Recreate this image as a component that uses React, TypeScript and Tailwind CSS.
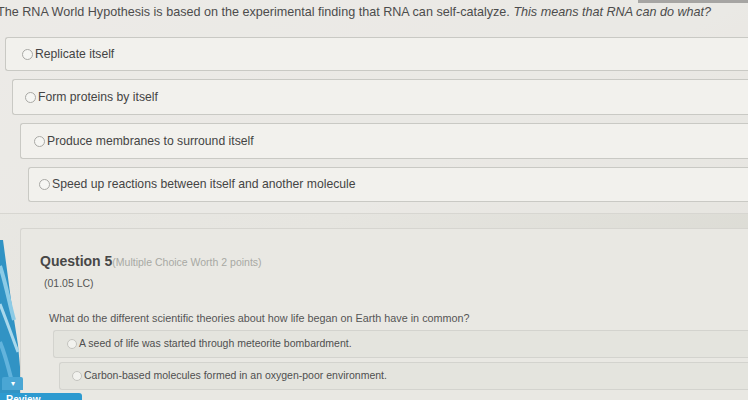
import React from "react";

type Choice = {
  label: string;
  box: string;
  pad: string;
};

const firstChoices: Choice[] = [
  { label: "Replicate itself", box: "ml-[5px] h-[34px]", pad: "pl-[16px]" },
  { label: "Form proteins by itself", box: "ml-[12px] h-[36px]", pad: "pl-[12px]" },
  { label: "Produce membranes to surround itself", box: "ml-[20px] h-[36px]", pad: "pl-[13px]" },
  { label: "Speed up reactions between itself and another molecule", box: "ml-[28px] h-[35px]", pad: "pl-[10px]" },
];

const nextChoices: Choice[] = [
  { label: "A seed of life was started through meteorite bombardment.", box: "ml-[32px] h-[28px]", pad: "pl-[13px]" },
  { label: "Carbon-based molecules formed in an oxygen-poor environment.", box: "ml-[38px] h-[28px]", pad: "pl-[12px]" },
];

function Radio({ small }: { small?: boolean }) {
  return (
    <span
      className={
        small
          ? "h-[10px] w-[10px] shrink-0 rounded-full border border-[#c4c4bf] bg-[#f2f2ee]"
          : "h-[11px] w-[11px] shrink-0 rounded-full border border-[#a9a9a5] bg-[#f6f6f3]"
      }
    />
  );
}

export default function App() {
  return (
    <div
      className="relative h-[400px] w-[748px] overflow-hidden bg-gradient-to-br from-[#ebeae6] via-[#e6e5e0] to-[#d6d6ce] text-[#4a4a4a]"
      style={{ fontFamily: '"Liberation Sans", Arial, sans-serif' }}
    >
      {/* wallpaper showing at the lower left */}
      <svg className="absolute left-0 top-0" width="40" height="400" viewBox="0 0 40 400">
        <polygon points="0,240 3,240 11,300 18,345 23,400 0,400" fill="#3193c4" />
        <path d="M0 266 C6 284 9 302 14 320" stroke="#8ccbe6" strokeWidth="4" fill="none" />
        <path d="M0 304 C7 322 12 336 18 352" stroke="#a9d8ec" strokeWidth="3" fill="none" />
        <path d="M0 342 C5 354 8 366 11 378" stroke="#62b3dc" strokeWidth="4" fill="none" />
      </svg>
      <div className="absolute right-0 top-0 h-[3px] w-[110px] bg-[#3d3d3d]" />

      <div className="relative flex flex-col">
        {/* previous question */}
        <section className="h-[214px] border-b border-[#d7d6d1] bg-[#ecebe7]/60">
          <p className="-ml-[3px] whitespace-nowrap pt-[5px] text-[12.6px] leading-[14px] text-[#4c4c4c]">
            The RNA World Hypothesis is based on the experimental finding that RNA can self-catalyze.{" "}
            <i>This means that RNA can do what?</i>
          </p>
          <div className="mt-[18px] flex flex-col gap-[8px]">
            {firstChoices.map((c) => (
              <div
                key={c.label}
                className={`${c.box} ${c.pad} flex items-center gap-[2px] rounded-l-[3px] border border-r-0 border-[#c9c9c4] bg-[#f2f1ed]`}
              >
                <Radio />
                <span className="whitespace-nowrap text-[12.2px] text-[#444]">{c.label}</span>
              </div>
            ))}
          </div>
        </section>

        {/* question 5 */}
        <section className="ml-[20px] mt-[14px] h-[200px] rounded-tl-[3px] border-l border-t border-[#d6d5d0] bg-[#e9e8e3] pl-[19px] pt-[22px]">
          <div className="flex items-baseline whitespace-nowrap">
            <span className="text-[14px] font-bold text-[#474747]">Question 5</span>
            <span className="text-[10.5px] text-[#a8a8a4]">(Multiple Choice Worth 2 points)</span>
          </div>
          <div className="ml-[4px] mt-[4px] text-[10.5px] text-[#555]">(01.05 LC)</div>
          <div className="ml-[9px] mt-[18px] whitespace-nowrap text-[10.8px] text-[#555]">
            What do the different scientific theories about how life began on Earth have in common?
          </div>
          <div className="-ml-[19px] mt-[4px] flex flex-col gap-[4px]">
            {nextChoices.map((c) => (
              <div
                key={c.label}
                className={`${c.box} ${c.pad} flex items-center gap-[2px] rounded-l-[3px] border border-r-0 border-[#d3d3ce] bg-[#e4e4de]`}
              >
                <Radio small />
                <span className="whitespace-nowrap text-[10.5px] text-[#4f4f4f]">{c.label}</span>
              </div>
            ))}
          </div>
        </section>
      </div>

      {/* bottom-left controls */}
      <div className="absolute left-[2px] top-[377px] flex h-[13px] w-[21px] items-center justify-center rounded-t-[2px] bg-[#4aa6d4] text-[8px] leading-none text-white">
        ▾
      </div>
      <div className="absolute left-0 top-[393px] h-[14px] w-[82px] rounded-tr-[3px] bg-[#2d9ad0] pl-[6px] pt-[2px] text-[10px] font-bold leading-none text-white">
        Review Questions
      </div>
    </div>
  );
}
